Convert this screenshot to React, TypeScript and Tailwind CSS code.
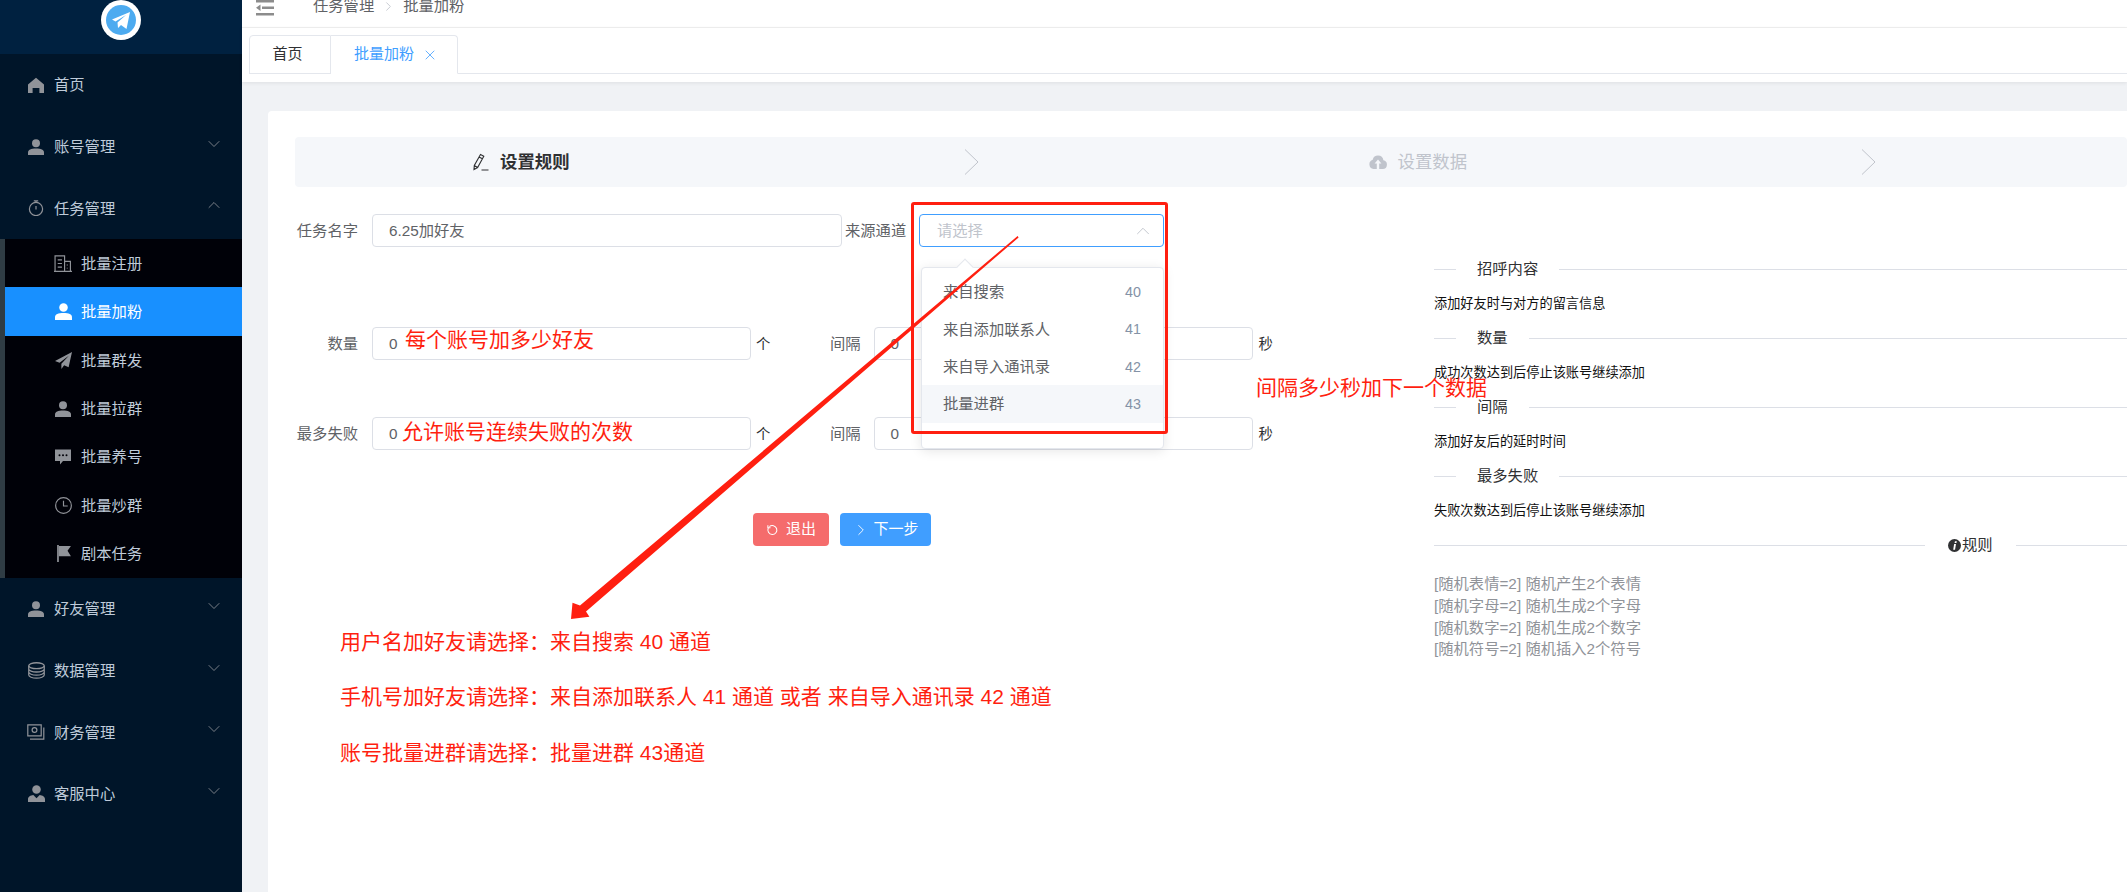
import React from 'react';
import { ChevronDown, ChevronRight, ChevronUp, X } from 'lucide-react';

type IconProps = { className?: string };

const HomeIcon = ({ className }: IconProps) => (
    <svg viewBox="0 0 16 16" className={className} fill="currentColor">
        <path d="M8 .8 16 7.600V16h-4.600v-5H4.600v5H0V7.600z" />
    </svg>
);

const UserIcon = ({ className }: IconProps) => (
    <svg viewBox="0 0 16 16" className={className} fill="currentColor">
        <circle cx="8" cy="4.200" r="4" />
        <path d="M0 13.400C0 10.600 3 9.400 8 9.400s8 1.200 8 4V16H0z" />
    </svg>
);

const ServiceIcon = ({ className }: IconProps) => (
    <svg viewBox="0 0 16 16" className={className} fill="currentColor">
        <circle cx="8" cy="4.200" r="4" />
        <path d="M0 16v-2.600c0-2.400 2.400-3.600 5-4l3 3 3-3c2.600.4 5 1.600 5 4V16z" />
    </svg>
);

const TimerIcon = ({ className }: IconProps) => (
    <svg viewBox="0 0 16 16" className={className} fill="none" stroke="currentColor" strokeWidth="1.2">
        <circle cx="8" cy="9" r="6.600" />
        <path d="M8 .8v1.600M5.800.8h4.400M8 6v3.600" />
    </svg>
);

const BuildingIcon = ({ className }: IconProps) => (
    <svg viewBox="0 0 17 16" className={className} fill="none" stroke="currentColor" strokeWidth="1.1">
        <path d="M1 15.500V.8h9v14.700M10 6h5.500v9.500M0 15.500h17M3.500 4.500h4M3.500 8h4M3.500 11.500h4M12.500 9v.8M12.500 12v.8" />
    </svg>
);

const SendIcon = ({ className }: IconProps) => (
    <svg viewBox="0 0 16 16" className={className} fill="currentColor">
        <path d="M16 0 0 8.500l4.300 1.700L13 3.500 6 11v5l2.600-3.500 4.200 1.800z" />
    </svg>
);

const ChatIcon = ({ className }: IconProps) => (
    <svg viewBox="0 0 16 16" className={className}>
        <path fill="currentColor" d="M0 .5h16v11.500H8l-3 3.500v-3.500H0z" />
        <circle cx="4.500" cy="6.200" r="1" fill="#000108" />
        <circle cx="8" cy="6.200" r="1" fill="#000108" />
        <circle cx="11.500" cy="6.200" r="1" fill="#000108" />
    </svg>
);

const ClockIcon = ({ className }: IconProps) => (
    <svg viewBox="0 0 16 16" className={className} fill="none" stroke="currentColor" strokeWidth="1.1">
        <circle cx="8" cy="8" r="7.400" />
        <path d="M8 3.500V8.500h4" />
    </svg>
);

const FlagIcon = ({ className }: IconProps) => (
    <svg viewBox="0 0 16 16" className={className} fill="currentColor">
        <path d="M2 0h1.600v16H2z" />
        <path d="M3.600 1H15l-3.200 4.400L15 10.500H3.600z" />
    </svg>
);

const CoinIcon = ({ className }: IconProps) => (
    <svg viewBox="0 0 16 16" className={className} fill="none" stroke="currentColor" strokeWidth="1.2">
        <ellipse cx="8" cy="3.500" rx="7.300" ry="2.800" />
        <path d="M.7 3.500v8.800c0 1.600 3.300 2.900 7.300 2.900s7.300-1.300 7.300-2.900V3.500M.7 6.500c0 1.600 3.300 2.900 7.300 2.900s7.300-1.300 7.300-2.900M.7 9.500c0 1.600 3.300 2.900 7.300 2.900s7.300-1.300 7.300-2.900" />
    </svg>
);

const MoneyIcon = ({ className }: IconProps) => (
    <svg viewBox="0 0 18 16" className={className} fill="none" stroke="currentColor" strokeWidth="1.2">
        <path d="M.8.800h13.400v11H.8zM16.800 3.500v11.700H3" />
        <circle cx="7.500" cy="6" r="2.400" />
    </svg>
);

const EditIcon = ({ className }: IconProps) => (
    <svg viewBox="0 0 16 18" className={className} fill="none" stroke="currentColor" strokeWidth="1.1">
        <path d="M7.500 1.500 10.800 3.300 4.600 14.500 1 16.500 1.300 12.400zM6 4 9.400 5.800M1.300 12.400 4.600 14.500M8.500 17h7" />
    </svg>
);

const CloudIcon = ({ className }: IconProps) => (
    <svg viewBox="0 0 18 16" className={className}>
        <path fill="currentColor" d="M14.400 6.300A5.500 5.500 0 0 0 9 1.500a5.500 5.500 0 0 0-5.300 4.200A4.800 4.800 0 0 0 4.500 15h9.300a4.400 4.400 0 0 0 .6-8.700z" />
        <path fill="#f5f7fa" d="M9 5.500 12.400 9.500H10.200V15H7.800V9.500H5.600z" />
    </svg>
);

const RefreshIcon = ({ className }: IconProps) => (
    <svg viewBox="0 0 16 16" className={className} fill="none" stroke="currentColor" strokeWidth="1.4">
        <path d="M4.500 3.500A6 6 0 1 1 3 5.500M2.500 1.500v3.500H6" />
    </svg>
);

const InfoIcon = ({ className }: IconProps) => (
    <svg viewBox="0 0 14 14" className={className}>
        <circle cx="7" cy="7" r="7" fill="#303133" />
        <path fill="#fff" d="M7.500 2.500h2l-.4 1.800h-2zM6.600 5.500h2L7.600 11.500H5.600z" />
    </svg>
);

const mainMenuTop = [
    { label: '首页', icon: <HomeIcon className="w-4 h-4" /> },
    { label: '账号管理', icon: <UserIcon className="w-4 h-4" />, arrow: 'down' },
    { label: '任务管理', icon: <TimerIcon className="w-4 h-4" />, arrow: 'up' },
];

const subMenu = [
    { label: '批量注册', icon: <BuildingIcon className="w-[18px] h-[17px]" /> },
    { label: '批量加粉', icon: <UserIcon className="w-[17px] h-[17px]" />, active: true },
    { label: '批量群发', icon: <SendIcon className="w-[17px] h-[17px]" /> },
    { label: '批量拉群', icon: <UserIcon className="w-[16px] h-[16px]" /> },
    { label: '批量养号', icon: <ChatIcon className="w-[16px] h-[16px]" /> },
    { label: '批量炒群', icon: <ClockIcon className="w-[17px] h-[17px]" /> },
    { label: '剧本任务', icon: <FlagIcon className="w-[17px] h-[17px]" /> },
];

const mainMenuBottom = [
    { label: '好友管理', icon: <UserIcon className="w-4 h-4" />, arrow: 'down' },
    { label: '数据管理', icon: <CoinIcon className="w-[17px] h-[17px]" />, arrow: 'down' },
    { label: '财务管理', icon: <MoneyIcon className="w-[18px] h-[16px]" />, arrow: 'down' },
    { label: '客服中心', icon: <ServiceIcon className="w-[17px] h-[17px]" />, arrow: 'down' },
];

const channelOptions = [
    { label: '来自搜索', value: 40 },
    { label: '来自添加联系人', value: 41 },
    { label: '来自导入通讯录', value: 42 },
    { label: '批量进群', value: 43, hover: true },
];

const ruleLines = ['[随机表情=2] 随机产生2个表情', '[随机字母=2] 随机生成2个字母', '[随机数字=2] 随机生成2个数字', '[随机符号=2] 随机插入2个符号'];

function MenuRow({ label, icon, arrow }: { label: string; icon: React.ReactNode; arrow?: string }) {
    return (
        <div className="h-[61.7px] flex items-center pl-[27px] text-[#bfcbd9]">
            <span className="w-[18px] flex justify-center text-[#909399]">{icon}</span>
            <span className="ml-[9px] pt-[2px] text-[15.3px]">{label}</span>
            {arrow === 'down' && <ChevronDown className="ml-auto mr-[18px] -mt-[6px] w-[20px] h-[20px] text-[#909399]" strokeWidth={1} />}
            {arrow === 'up' && <ChevronUp className="ml-auto mr-[18px] -mt-[6px] w-[20px] h-[20px] text-[#909399]" strokeWidth={1} />}
        </div>
    );
}

function Sidebar() {
    return (
        <aside className="w-[242px] shrink-0 bg-[#001529] flex flex-col">
            <div className="h-[54px] bg-[#002140] flex justify-center">
                <div className="w-10 h-10 rounded-full bg-white flex items-center justify-center">
                    <svg viewBox="0 0 30 30" className="w-[30px] h-[30px]">
                        <circle cx="15" cy="15" r="15" fill="#4dabf0" />
                        <path fill="#fff" d="M6 14.500 24 7l-3.500 17-5.500-4-3 3-.5-5.500 8.500-7.500-10.500 6.500z" />
                    </svg>
                </div>
            </div>
            {mainMenuTop.map((item) => (
                <MenuRow key={item.label} {...item} />
            ))}
            <div className="bg-[#000108] border-l-[5px] border-[#2f3c44]">
                {subMenu.map((item) => (
                    <div
                        key={item.label}
                        className={`h-[48.43px] flex items-center pl-[49px] ${item.active ? 'bg-[#1890ff] text-white' : 'text-[#bfcbd9]'}`}
                    >
                        <span className={`w-[18px] flex justify-center ${item.active ? 'text-white' : 'text-[#909399]'}`}>{item.icon}</span>
                        <span className="ml-[9px] pt-[2px] text-[15.3px]">{item.label}</span>
                    </div>
                ))}
            </div>
            {mainMenuBottom.map((item) => (
                <MenuRow key={item.label} {...item} />
            ))}
        </aside>
    );
}

function Header() {
    return (
        <>
            <div className="h-[28px] bg-white border-b border-[#f0f0f0] overflow-hidden">
                <div className="h-4 flex items-center pl-[14px] text-[15.3px] text-[#606266]">
                    <svg viewBox="0 0 18 16" className="w-[18px] h-4 shrink-0 text-[#8c8c8c]" fill="currentColor">
                        <path d="M0 0h18v2.500H0zM6 6.500h12v2.500H6zM0 13h18v2.500H0zM4.500 4.500v6.500L0 7.700z" />
                    </svg>
                    <span className="ml-[39px] -mt-[4px]">任务管理</span>
                    <ChevronRight className="mx-[7px] -mt-[4px] w-[15px] h-[15px] text-[#c0c4cc]" strokeWidth={1.4} />
                    <span className="-mt-[4px]">批量加粉</span>
                </div>
            </div>
            <div className="h-[54px] bg-white shadow-[0_1px_4px_rgba(0,0,0,0.08)] pt-[7px] pl-[7px] flex items-start">
                <div className="flex h-[39px] w-full border-b border-[#e4e7ed]">
                    <div className="w-[82px] h-[39px] border border-[#e4e7ed] rounded-tl-[4px] flex items-center justify-center pr-[5px] text-[15px] text-[#303133]">
                        首页
                    </div>
                    <div className="w-[127px] h-[39px] border border-l-0 border-b-white border-[#e4e7ed] rounded-tr-[4px] flex items-center pl-[23px] text-[15px] text-[#409eff]">
                        批量加粉
                        <X className="ml-[8px] w-[16px] h-[16px]" strokeWidth={1.2} />
                    </div>
                </div>
            </div>
        </>
    );
}

function Field({ value, className }: { value: string; className: string }) {
    return (
        <div className={`h-[33px] border border-[#dcdfe6] rounded-[4px] bg-white flex items-center pl-[16px] pt-[2px] text-[15.3px] text-[#606266] ${className}`}>
            {value}
        </div>
    );
}

function Label({ children }: { children: React.ReactNode }) {
    return <div className="w-[63px] mr-[14px] pt-[2px] text-right text-[15.3px] text-[#606266] whitespace-nowrap">{children}</div>;
}

function CountRow({ label, className }: { label: string; className: string }) {
    return (
        <div className={`flex items-center ${className}`}>
            <Label>{label}</Label>
            <Field value="0" className="w-[379px]" />
            <span className="ml-[5px] mt-[3px] w-[15px] text-[14.3px] text-[#303133]">个</span>
            <span className="ml-[59px] pt-[2px] text-[15.3px] text-[#606266]">间隔</span>
            <Field value="0" className="ml-[13px] w-[379px]" />
            <span className="ml-[6px] mt-[3px] text-[14.3px] text-[#303133]">秒</span>
        </div>
    );
}

function ChannelSelect() {
    return (
        <div className="relative w-[245px] h-[33px] border border-[#409eff] rounded-[4px] flex items-center pl-[17px] pr-[9px] text-[15.3px] text-[#c0c4cc]">
            <span className="pt-[2px]">请选择</span>
            <ChevronUp className="ml-auto w-[22px] h-[22px]" strokeWidth={1} />
            <div className="absolute left-[1px] top-[52px] w-[243px] h-[182px] bg-white border border-[#e4e7ed] rounded-[4px] shadow-[0_2px_12px_rgba(0,0,0,0.1)] pt-[5px] z-10">
                <div className="absolute -top-[7px] left-[37px] w-3 h-3 rotate-45 bg-white border-l border-t border-[#e4e7ed]" />
                {channelOptions.map((option) => (
                    <div
                        key={option.value}
                        className={`relative h-[37.4px] flex items-center justify-between pl-[21px] pr-[22px] pt-[2px] ${option.hover ? 'bg-[#f5f7fa]' : ''}`}
                    >
                        <span className="text-[15.3px] text-[#606266]">{option.label}</span>
                        <span className="text-[14.3px] text-[#8492a6]">{option.value}</span>
                    </div>
                ))}
            </div>
        </div>
    );
}

function HelpDivider({ label }: { label: string }) {
    return (
        <div className="flex items-center h-[20px]">
            <div className="w-[22px] h-px bg-[#dcdfe6]" />
            <span className="px-[21px] text-[15.3px] text-[#303133] whitespace-nowrap">{label}</span>
            <div className="flex-1 h-px bg-[#dcdfe6]" />
        </div>
    );
}

function HelpPanel() {
    const items = [
        { title: '招呼内容', text: '添加好友时与对方的留言信息' },
        { title: '数量', text: '成功次数达到后停止该账号继续添加' },
        { title: '间隔', text: '添加好友后的延时时间' },
        { title: '最多失败', text: '失败次数达到后停止该账号继续添加' },
    ];

    return (
        <div className="flex-1 pt-[72px] min-w-0">
            {items.map((item) => (
                <div key={item.title} className="h-[69px]">
                    <HelpDivider label={item.title} />
                    <div className="mt-[12px] pt-[3px] h-[22px] flex items-center text-[13.2px] text-[#111] whitespace-nowrap">{item.text}</div>
                </div>
            ))}
            <div className="flex items-center h-[20px]">
                <div className="w-[491px] h-px bg-[#dcdfe6]" />
                <span className="px-[23px] flex items-center text-[15.3px] text-[#303133] whitespace-nowrap">
                    <InfoIcon className="w-[13px] h-[13px] mr-px" />
                    规则
                </span>
                <div className="flex-1 h-px bg-[#dcdfe6]" />
            </div>
            <div className="mt-[18px] text-[15.3px] leading-[21.8px] text-[#909399] whitespace-nowrap">
                {ruleLines.map((line) => (
                    <div key={line}>{line}</div>
                ))}
            </div>
        </div>
    );
}

function RuleForm() {
    return (
        <div className="w-[1139px] shrink-0">
            <div className="flex items-center mt-[27px]">
                <Label>任务名字</Label>
                <Field value="6.25加好友" className="w-[470px]" />
                <span className="ml-[3px] mr-[13px] pt-[2px] w-[61px] text-[15.3px] text-[#606266] whitespace-nowrap">来源通道</span>
                <ChannelSelect />
            </div>
            <CountRow label="数量" className="mt-[80px]" />
            <CountRow label="最多失败" className="mt-[57px]" />
            <div className="flex mt-[63px] ml-[458px] text-[15px] text-white">
                <div className="w-[76px] h-[33px] rounded-[4px] bg-[#f56c6c] flex items-center justify-center">
                    <RefreshIcon className="w-[12px] h-[12px] mr-[6px]" />
                    <span className="pl-[2px]">退出</span>
                </div>
                <div className="ml-[11px] w-[91px] h-[33px] rounded-[4px] bg-[#409eff] flex items-center justify-center">
                    <ChevronRight className="w-[18px] h-[18px] mr-[3px]" strokeWidth={1.2} />
                    下一步
                </div>
            </div>
        </div>
    );
}

function StepBar() {
    return (
        <div className="h-[50px] bg-[#f5f7fa] rounded-[4px] flex items-center">
            <EditIcon className="ml-[178px] w-4 h-[18px] text-[#303133]" />
            <span className="ml-[11px] text-[17.4px] font-bold text-[#303133]">设置规则</span>
            <svg viewBox="0 0 15 26" className="ml-[394px] w-[15px] h-[26px] text-[#c0c4cc]" fill="none" stroke="currentColor">
                <path d="M1 .5 14 13 1 25.500" />
            </svg>
            <CloudIcon className="ml-[390px] w-[18px] h-4 text-[#c0c4cc]" />
            <span className="ml-[11px] text-[17.4px] text-[#c0c4cc]">设置数据</span>
            <svg viewBox="0 0 15 26" className="ml-[394px] w-[15px] h-[26px] text-[#c0c4cc]" fill="none" stroke="currentColor">
                <path d="M1 .5 14 13 1 25.500" />
            </svg>
        </div>
    );
}

/* red notes drawn over the screenshot */
function Annotations() {
    const note = 'absolute text-[21px] leading-[30px] font-normal text-[#ff1f10] whitespace-nowrap';

    return (
        <>
            <div className="absolute left-[911px] top-[202px] w-[257px] h-[232px] border-[3px] border-[#ff1f10] rounded-[3px] z-20" />
            <svg viewBox="0 0 2127 892" className="absolute inset-0 w-[2127px] h-[892px] pointer-events-none z-20">
                <polygon fill="#ff1f10" points="1017.6,236 1018.6,237.400 586,611.500 589.400,616.700 571,619 572.500,602.700 580,605.500" />
            </svg>
            <div className={`${note} left-[405px] top-[325px] z-30`}>每个账号加多少好友</div>
            <div className={`${note} left-[402px] top-[417px] z-30`}>允许账号连续失败的次数</div>
            <div className={`${note} left-[1256px] top-[373px] z-30`}>间隔多少秒加下一个数据</div>
            <div className={`${note} left-[340px] top-[627px] z-30`}>用户名加好友请选择：来自搜索 40 通道</div>
            <div className={`${note} left-[340px] top-[682px] z-30`}>手机号加好友请选择：来自添加联系人 41 通道 或者 来自导入通讯录 42 通道</div>
            <div className={`${note} left-[340px] top-[738px] z-30`}>账号批量进群请选择：批量进群 43通道</div>
        </>
    );
}

export default function App() {
    return (
        <div className="relative w-[2127px] h-[892px] overflow-hidden flex bg-[#f0f2f5] font-['Liberation_Sans','Noto_Sans_CJK_SC',sans-serif]">
            <Sidebar />
            <main className="flex-1 min-w-0 flex flex-col">
                <Header />
                <div className="flex-1 pl-[26px] pt-[29px] overflow-hidden">
                    <div className="h-full bg-white rounded-tl-[4px] pl-[27px] pt-[26px]">
                        <StepBar />
                        <div className="flex">
                            <RuleForm />
                            <HelpPanel />
                        </div>
                    </div>
                </div>
            </main>
            <Annotations />
        </div>
    );
}
